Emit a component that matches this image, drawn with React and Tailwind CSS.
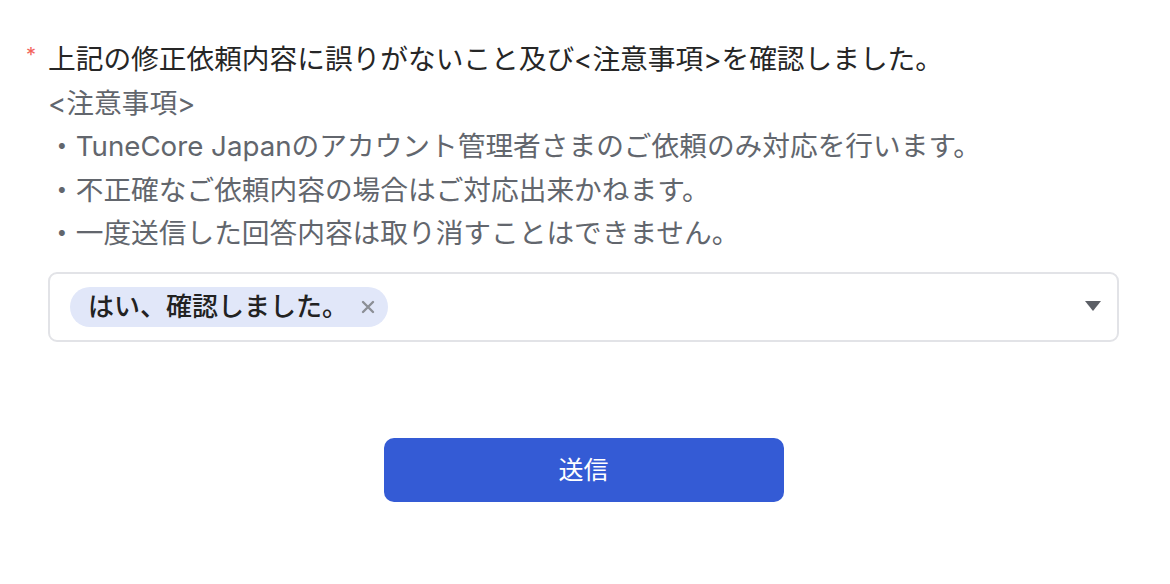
import React from "react";

export default function App() {
  return (
    <div
      className="w-[1170px] h-[584px] bg-white overflow-hidden"
      style={{ fontFamily: 'Inter, "Noto Sans CJK JP", "Noto Sans", sans-serif' }}
    >
      <div className="pl-[48px] pr-[51px] pt-[38px]">
        <div className="relative text-[27.7px] leading-[43.5px] text-[#262626]">
          <span className="absolute left-[-22px] top-[-4px] text-[20px] text-[#f2625b]">*</span>
          上記の修正依頼内容に誤りがないこと及び&lt;注意事項&gt;を確認しました。
        </div>
        <div className="text-[27.7px] leading-[43.5px] text-[#62666d]">
          <div>&lt;注意事項&gt;</div>
          <div>・TuneCore Japanのアカウント管理者さまのご依頼のみ対応を行います。</div>
          <div>・不正確なご依頼内容の場合はご対応出来かねます。</div>
          <div>・一度送信した回答内容は取り消すことはできません。</div>
        </div>
        <div className="mt-[16px] h-[70px] border-2 border-[#e2e3e7] rounded-[9px] flex items-center pl-[20px] pr-[16px]">
          <div className="h-[40px] rounded-full bg-[#e1e7f9] flex items-center pl-[18px] pr-[13px]">
            <span className="text-[26px] font-medium text-[#222]">はい、確認しました。</span>
            <svg className="ml-[13px]" width="14" height="14" viewBox="0 0 14 14">
              <path d="M2 2 L12 12 M12 2 L2 12" stroke="#8c8f96" strokeWidth="2.4" strokeLinecap="round" />
            </svg>
          </div>
          <div className="flex-1" />
          <svg width="16" height="11" viewBox="0 0 16 11">
            <path d="M0 0 H16 L8 10 Z" fill="#5c5f66" />
          </svg>
        </div>
        <div className="flex justify-center mt-[96px]">
          <button className="w-[400px] h-[64px] rounded-[10px] bg-[#345bd5] text-white text-[25px] pt-[2px]">
            送信
          </button>
        </div>
      </div>
    </div>
  );
}
